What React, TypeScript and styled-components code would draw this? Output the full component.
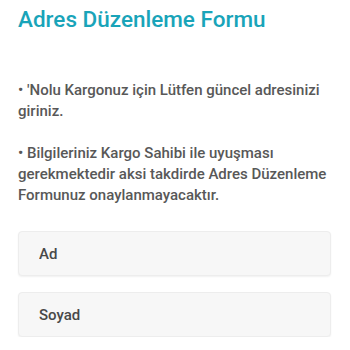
import React from 'react';
import styled, { createGlobalStyle } from 'styled-components';

const GlobalStyle = createGlobalStyle`
  body {
    margin: 0;
    background: #fff;
    font-family: Roboto, "Noto Sans", sans-serif;
  }
`;

// 페이지 래퍼
const Page = styled.div`
  padding: 4px 19px 0 18px;
`;

const Title = styled.h1`
  margin: 0;
  font-size: 22.5px;
  line-height: 30px;
  font-weight: 500;
  color: #19a4b9;
`;

const Note = styled.p`
  margin: 0;
  font-size: 15px;
  line-height: 21px;
  font-weight: 500;
  color: #585858;
`;

const Notes = styled.div`
  display: flex;
  flex-direction: column;
  gap: 21px;
  margin-top: 46px;
`;

const Fields = styled.div`
  display: flex;
  flex-direction: column;
  gap: 16px;
  margin-top: 25px;
`;

const Field = styled.input`
  box-sizing: border-box;
  width: 100%;
  height: 45px;
  padding: 0 20px;
  border: 1px solid #ededed;
  border-radius: 4px;
  background: #f7f7f7;
  box-shadow: 0 1px 2px rgba(0, 0, 0, 0.06);
  font-family: Roboto, "Noto Sans", sans-serif;
  font-size: 15px;
  font-weight: 500;
  color: #444;
  outline: none;

  &::placeholder {
    color: #484848;
  }
`;

const App = () => (
  <Page>
    <GlobalStyle />
    <Title>Adres Düzenleme Formu</Title>
    <Notes>
      <Note>• 'Nolu Kargonuz için Lütfen güncel adresinizi giriniz.</Note>
      <Note>
        • Bilgileriniz Kargo Sahibi ile uyuşması gerekmektedir aksi takdirde Adres Düzenleme
        Formunuz onaylanmayacaktır.
      </Note>
    </Notes>
    <Fields>
      <Field placeholder="Ad" />
      <Field placeholder="Soyad" />
    </Fields>
  </Page>
);

export default App;
